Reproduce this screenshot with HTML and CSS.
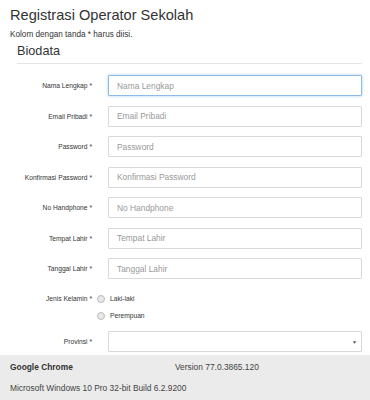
FILE: index.html
```html
<!DOCTYPE html>
<html>
<head>
<meta charset="utf-8">
<link rel="stylesheet" href="styles.css">
</head>
<body>
<div class="page">
  <h1 class="title">Registrasi Operator Sekolah</h1>
  <p class="note">Kolom dengan tanda * harus diisi.</p>
  <div class="section">
    <div class="legend">Biodata</div>
  </div>
  <form class="form">
    <div class="row"><label class="lbl">Nama Lengkap *</label><input class="ctl focus" placeholder="Nama Lengkap"></div>
    <div class="row"><label class="lbl">Email Pribadi *</label><input class="ctl" placeholder="Email Pribadi"></div>
    <div class="row"><label class="lbl">Password *</label><input class="ctl" placeholder="Password"></div>
    <div class="row"><label class="lbl">Konfirmasi Password *</label><input class="ctl" placeholder="Konfirmasi Password"></div>
    <div class="row"><label class="lbl">No Handphone *</label><input class="ctl" placeholder="No Handphone"></div>
    <div class="row"><label class="lbl">Tempat Lahir *</label><input class="ctl" placeholder="Tempat Lahir"></div>
    <div class="row"><label class="lbl">Tanggal Lahir *</label><input class="ctl" placeholder="Tanggal Lahir"></div>
    <div class="row radios">
      <label class="lbl">Jenis Kelamin *</label>
      <div class="radio-list">
        <div class="radio"><span class="dot"></span><span>Laki-laki</span></div>
        <div class="radio"><span class="dot"></span><span>Perempuan</span></div>
      </div>
    </div>
    <div class="row"><label class="lbl">Provinsi *</label><div class="ctl select"><span class="arrow">▼</span></div></div>
  </form>
</div>
<div class="footer">
  <div class="frow"><span class="browser">Google Chrome</span><span class="version">Version 77.0.3865.120</span></div>
  <div class="frow">Microsoft Windows 10 Pro 32-bit Build 6.2.9200</div>
</div>
</body>
</html>
```
FILE: styles.css
```css
html, body {
  margin: 0;
  padding: 0;
  background: #fff;
  font-family: "Liberation Sans", Arial, sans-serif;
  color: #333;
}
.page {
  padding: 7px 8px 0 10px;
  height: 355px;
  box-sizing: border-box;
}
.title {
  margin: 0;
  font-size: 14.6px;
  font-weight: normal;
  line-height: 16px;
}
.note {
  margin: 7px 0 0;
  font-size: 8.2px;
  line-height: 10px;
}
.section {
  padding-left: 7px;
  margin-top: 4px;
}
.legend {
  font-size: 12.7px;
  line-height: 15px;
  padding-bottom: 4px;
  border-bottom: 1px solid #e5e5e5;
}
.form {
  margin-top: 11px;
  display: flex;
  flex-direction: column;
  gap: 9.5px;
}
.row {
  display: grid;
  grid-template-columns: 82px 1fr;
  column-gap: 16px;
  align-items: center;
}
.lbl {
  text-align: right;
  font-size: 6.7px;
  color: #333;
}
.ctl {
  height: 21px;
  box-sizing: border-box;
  border: 1px solid #d9d9d9;
  border-radius: 1px;
  padding: 0 8px;
  font-family: "Liberation Sans", Arial, sans-serif;
  font-size: 8.4px;
  color: #555;
  outline: none;
  width: 100%;
  background: #fff;
}
.ctl::placeholder {
  color: #999;
}
.focus {
  border-color: #8dbde6;
  box-shadow: 0 0 3px rgba(102, 175, 233, 0.6);
}
.radios {
  align-items: start;
  margin-top: 4px;
}
.radios .lbl {
  line-height: 12px;
}
.radio-list {
  display: flex;
  flex-direction: column;
  gap: 5px;
  margin-left: -11px;
}
.radio {
  display: flex;
  align-items: center;
  gap: 5px;
  font-size: 6.7px;
  line-height: 12px;
}
.dot {
  width: 6px;
  height: 6px;
  border-radius: 50%;
  border: 1px solid #bbb;
  background: #e8e8e8;
}
.select {
  display: flex;
  justify-content: flex-end;
  align-items: center;
  padding-right: 4px;
}
.arrow {
  font-size: 5px;
  color: #555;
}
.footer {
  background: #ebebeb;
  height: 45px;
  padding: 1.5px 10px 0;
  box-sizing: border-box;
  font-size: 8.4px;
  color: #444;
}
.frow {
  height: 21px;
  display: flex;
  align-items: center;
}
.browser {
  font-weight: bold;
  width: 165px;
  color: #333;
}
```
